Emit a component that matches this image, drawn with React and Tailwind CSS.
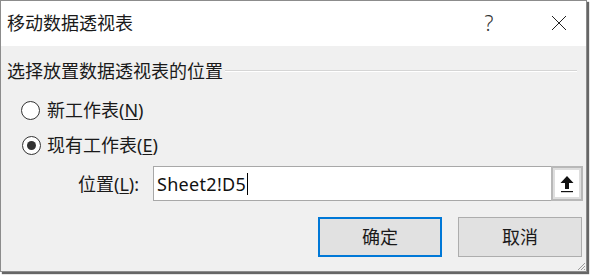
import React from "react";

const F = { fontFamily: '"Noto Sans", "Noto Sans CJK SC", sans-serif' };

function Radio({ checked }) {
  return (
    <div className="w-[19px] h-[19px] rounded-full border border-[#333333] bg-white flex items-center justify-center shrink-0">
      {checked && <div className="w-[9px] h-[9px] rounded-full bg-[#333333]" />}
    </div>
  );
}

export default function App() {
  return (
    <div className="w-[594px] h-[276px] bg-white relative overflow-hidden" style={F}>
      <div className="w-[587px] h-[272px] border border-[#8c8c8c] flex flex-col shadow-[2px_2px_1px_rgba(0,0,0,0.6)] bg-[#f0f0f0]">
        {/* Title bar */}
        <div className="h-[45px] bg-white flex items-center pl-[6px] shrink-0">
          <div className="text-[18px] leading-[24px] text-[#1a1a1a] pb-[2px]">移动数据透视表</div>
          <div className="ml-auto flex items-center">
            <div className="text-[21px] leading-[24px] text-[#333] font-light w-[20px] text-center mr-[52px] pb-[2px]">?</div>
            <svg width="16" height="16" viewBox="0 0 16 16" className="mr-[19px] mb-[1px]">
              <path d="M1 1 L15 15 M15 1 L1 15" stroke="#222" strokeWidth="1" fill="none" />
            </svg>
          </div>
        </div>
        {/* Body */}
        <div className="flex-1 flex flex-col relative">
          <div className="mt-[13px] h-[24px] flex items-center pl-[6px]">
            <span className="text-[18px] leading-[24px] text-[#1a1a1a]">选择放置数据透视表的位置</span>
            <div className="flex-1 ml-[2px] mr-[9px] flex flex-col">
              <div className="h-px bg-[#d5d5d5]" />
              <div className="h-px bg-white" />
            </div>
          </div>
          <div className="mt-[15px] h-[24px] flex items-center pl-[20px] gap-[7px]">
            <Radio />
            <span className="text-[18px] leading-[24px] text-[#1a1a1a]">新工作表(<span className="underline underline-offset-2">N</span>)</span>
          </div>
          <div className="mt-[11px] h-[24px] flex items-center pl-[21px] gap-[6px]">
            <Radio checked />
            <span className="text-[18px] leading-[24px] text-[#1a1a1a]">现有工作表(<span className="underline underline-offset-2">E</span>)</span>
          </div>
          <div className="mt-[9px] h-[35px] flex items-center">
            <span className="ml-[77px] w-[75px] text-[18px] leading-[24px] text-[#1a1a1a]">位置(<span className="underline underline-offset-2">L</span>):</span>
            <div className="w-[430px] h-[35px] border border-[#a8a8a8] bg-white flex items-center">
              <span className="ml-[3px] text-[18px] leading-[24px] text-[#111] tracking-[0.3px]">Sheet2!D5</span>
              <div className="w-px h-[22px] bg-black ml-[1px]" />
              <div className="ml-auto w-[32px] h-[35px] -my-px -mr-px border-2 border-[#b8b8b8] bg-white shadow-[inset_0_0_0_2px_#dedede] flex items-center justify-center">
                <svg width="14" height="20" viewBox="0 0 14 20">
                  <path d="M7 2 L13.5 9 L9 9 L9 15 L5 15 L5 9 L0.5 9 Z" fill="#111" />
                  <rect x="1" y="17" width="12" height="1.2" fill="#111" />
                </svg>
              </div>
            </div>
          </div>
          <div className="mt-[16px] h-[40px] flex pl-[317px] gap-[16px]">
            <div className="w-[124px] h-[40px] border-2 border-[#0078d7] bg-[#e1e1e1] flex items-center justify-center text-[18px] text-[#1a1a1a]">确定</div>
            <div className="w-[124px] h-[40px] border border-[#adadad] bg-[#e1e1e1] flex items-center justify-center text-[18px] text-[#1a1a1a]">取消</div>
          </div>
          <svg width="10" height="10" viewBox="0 0 10 10" className="absolute right-0 bottom-0">
            <path d="M9 2 L2 9 M9 5 L5 9 M9 8 L8 9" stroke="#9a9a9a" strokeWidth="1" />
          </svg>
        </div>
      </div>
    </div>
  );
}
